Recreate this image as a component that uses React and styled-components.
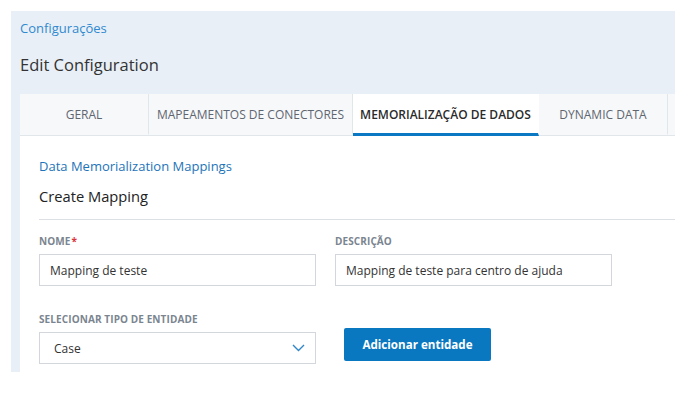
import React from "react";
import styled, { createGlobalStyle } from "styled-components";

const Global = createGlobalStyle`
  html, body { margin: 0; padding: 0; background: #fff; }
  body { font-family: "Open Sans", "Noto Sans", sans-serif; color: #333; }
  * { box-sizing: border-box; }
`;

const Page = styled.div`
  padding: 11px 12px 0 11px;
`;

const Panel = styled.div`
  background: #e9eff6;
  height: 361px;
  overflow: hidden;
  padding: 8px 0 0 9px;
`;

const Crumb = styled.a`
  display: block;
  font-size: 13px;
  line-height: 18px;
  color: #2f8ad0;
  text-decoration: none;
`;

const Title = styled.h1`
  margin: 16px 0 0;
  font-size: 16.5px;
  font-weight: 400;
  line-height: 24px;
  color: #333;
`;

const Card = styled.div`
  margin-top: 17px;
  width: 720px;
  background: #fff;
  height: 300px;
`;

const Tabs = styled.div`
  display: flex;
  height: 42px;
  background: #f6f8fa;
  border-bottom: 1px solid #e1e6eb;
`;

const Tab = styled.div`
  width: ${(p) => p.w}px;
  flex: none;
  display: flex;
  align-items: center;
  justify-content: center;
  font-size: 12px;
  text-transform: uppercase;
  color: ${(p) => (p.active ? "#2b2b2b" : "#5f6670")};
  font-weight: ${(p) => (p.active ? 600 : 400)};
  background: ${(p) => (p.active ? "#fff" : "transparent")};
  border-right: 1px solid ${(p) => (p.active ? "transparent" : "#e1e6eb")};
  border-bottom: 3px solid ${(p) => (p.active ? "#0a78c2" : "transparent")};
  margin-bottom: -1px;
  padding-top: 1px;
`;

const Body = styled.div`
  padding: 21px 0 0 19px;
`;

const SubLink = styled.div`
  font-size: 13px;
  line-height: 18px;
  color: #1d74b9;
`;

const SubTitle = styled.h2`
  margin: 10px 0 0;
  font-size: 14.7px;
  font-weight: 400;
  line-height: 22px;
  color: #222;
`;

const Divider = styled.hr`
  margin: 12px 0 0;
  border: 0;
  border-top: 1px solid #dcdfe3;
`;

const Row = styled.div`
  display: flex;
  align-items: flex-end;
  gap: 19px;
  margin-top: ${(p) => p.mt}px;
`;

const Field = styled.div`
  display: flex;
  flex-direction: column;
  width: ${(p) => p.w}px;
`;

const Label = styled.label`
  font-size: 10px;
  font-weight: 700;
  letter-spacing: 0.1px;
  line-height: 14px;
  color: #7b8590;
  text-transform: uppercase;
  margin-bottom: 6px;
`;

const Req = styled.span`
  color: #d9363e;
  margin-left: 1px;
`;

const Input = styled.div`
  height: 32px;
  border: 1px solid #d3d7db;
  display: flex;
  align-items: center;
  padding: 0 10px;
  font-size: 12px;
  color: #333;
`;

const Select = styled(Input)`
  justify-content: space-between;
  padding: 0 10px 0 14px;
`;

const Button = styled.button`
  margin-left: 9px;
  margin-bottom: 3px;
  height: 33px;
  width: 147px;
  border: 0;
  border-radius: 2px;
  background: #0a78c0;
  color: #fff;
  font-family: inherit;
  font-size: 11.6px;
  font-weight: 700;
`;

const Chevron = () => (
  <svg width="13" height="8" viewBox="0 0 13 8">
    <path d="M1 1l5.5 5.5L12 1" fill="none" stroke="#2f86c9" strokeWidth="1.4" />
  </svg>
);

const tabs = [
  { label: "Geral", w: 129 },
  { label: "Mapeamentos de conectores", w: 204 },
  { label: "Memorialização de dados", w: 186, active: true },
  { label: "Dynamic Data", w: 129 },
  { label: "", w: 80 },
];

export default function App() {
  return (
    <Page>
      <Global />
      <Panel>
        <Crumb>Configurações</Crumb>
        <Title>Edit Configuration</Title>
        <Card>
          <Tabs>
            {tabs.map((t, i) => (
              <Tab key={i} w={t.w} active={t.active}>
                {t.label}
              </Tab>
            ))}
          </Tabs>
          <Body>
            <SubLink>Data Memorialization Mappings</SubLink>
            <SubTitle>Create Mapping</SubTitle>
            <Divider />
            <Row mt={14}>
              <Field w={277}>
                <Label>
                  Nome<Req>*</Req>
                </Label>
                <Input>Mapping de teste</Input>
              </Field>
              <Field w={277}>
                <Label>Descrição</Label>
                <Input>Mapping de teste para centro de ajuda</Input>
              </Field>
            </Row>
            <Row mt={26}>
              <Field w={277}>
                <Label>Selecionar tipo de entidade</Label>
                <Select>
                  <span>Case</span>
                  <Chevron />
                </Select>
              </Field>
              <Button>Adicionar entidade</Button>
            </Row>
          </Body>
        </Card>
      </Panel>
    </Page>
  );
}
